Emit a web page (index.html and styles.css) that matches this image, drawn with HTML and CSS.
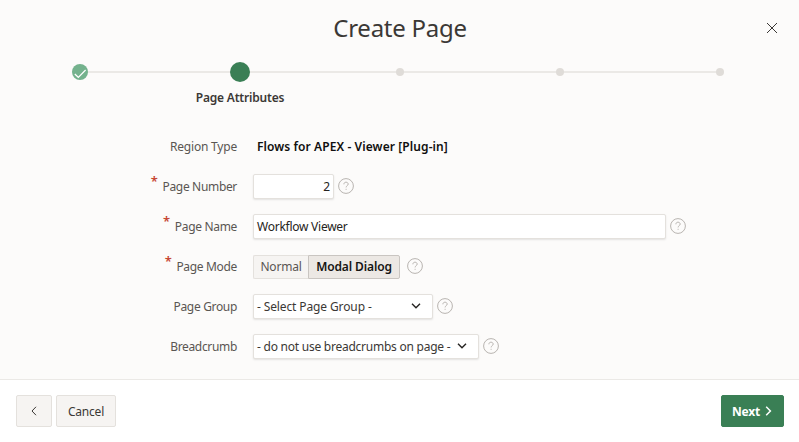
FILE: index.html
```html
<!DOCTYPE html>
<html lang="en">
<head>
<meta charset="utf-8">
<title>Create Page</title>
<link rel="stylesheet" href="styles.css">
</head>
<body>
<svg class="defs" width="0" height="0">
  <symbol id="help" viewBox="0 0 16 16"><circle cx="8" cy="8" r="7.4"/><path d="M5.9 6.3C5.9 4.9 6.8 4.2 8 4.2s2.2.8 2.2 1.9C10.2 7.6 8.1 7.7 8.1 9.4M8.1 10.8v1"/></symbol>
  <symbol id="down" viewBox="0 0 10 6"><path d="M1 .8l4 4 4-4"/></symbol>
</svg>
<div class="dialog">
  <header class="header">
    <h1 class="title">Create Page</h1>
    <button class="close" aria-label="Close"><svg width="12" height="12" viewBox="0 0 12 12"><path d="M1 1l10 10M11 1L1 11"/></svg></button>
  </header>
  <ol class="steps">
    <li class="step done"><span class="marker"><svg width="16" height="16" viewBox="0 0 16 16"><path d="M2.8 10l3.5 3.3L13.6 6"/></svg></span></li>
    <li class="step current"><span class="marker"></span><span class="step-label">Page Attributes</span></li>
    <li class="step"><span class="marker"></span></li>
    <li class="step"><span class="marker"></span></li>
    <li class="step"><span class="marker"></span></li>
  </ol>
  <main class="form">
    <div class="row"><span class="label type">Region Type</span><strong class="value">Flows for APEX - Viewer [Plug-in]</strong></div>
    <div class="row"><label class="label required">Page Number</label><div class="field number">2</div><svg class="help"><use href="#help"/></svg></div>
    <div class="row"><label class="label required">Page Name</label><div class="field name">Workflow Viewer</div><svg class="help"><use href="#help"/></svg></div>
    <div class="row"><label class="label required">Page Mode</label><div class="toggle"><span class="option">Normal</span><span class="option selected">Modal Dialog</span></div><svg class="help wide"><use href="#help"/></svg></div>
    <div class="row"><label class="label">Page Group</label><div class="field group"><span>- Select Page Group -</span><svg class="arrow"><use href="#down"/></svg></div><svg class="help"><use href="#help"/></svg></div>
    <div class="row"><label class="label">Breadcrumb</label><div class="field crumb"><span>- do not use breadcrumbs on page -</span><svg class="arrow"><use href="#down"/></svg></div><svg class="help"><use href="#help"/></svg></div>
  </main>
  <footer class="footer">
    <button class="button back" aria-label="Back"><svg width="6" height="10" viewBox="0 0 6 10"><path d="M5 .8L1 5l4 4.2"/></svg></button>
    <button class="button cancel">Cancel</button>
    <button class="button next"><span>Next</span><svg width="7" height="10" viewBox="0 0 7 10"><path d="M1.2 .8L5.4 5 1.2 9.2"/></svg></button>
  </footer>
</div>
</body>
</html>
```

FILE: styles.css
```css
* { box-sizing: border-box; }
body {
  margin: 0;
  background: #fff;
  color: #3b3835;
  font: 12px/16px "Noto Sans", "Open Sans", sans-serif;
}
svg { fill: none; stroke: currentColor; flex: none; }
.defs { position: absolute; }
button { font: inherit; color: inherit; margin: 0; padding: 0; }
.dialog {
  display: flex;
  flex-direction: column;
  width: 799px;
  height: 442px;
}
.header {
  position: relative;
  height: 61px;
  padding-top: 12px;
  background: #fcfbfa;
  text-align: center;
}
.title {
  margin: 0;
  padding-left: 1px;
  font-size: 24px;
  line-height: 32px;
  font-weight: 400;
  letter-spacing: -.27px;
}
.close {
  position: absolute;
  top: 22px;
  right: 21px;
  width: 12px;
  height: 12px;
  display: flex;
  border: 0;
  background: none;
}
.steps {
  display: grid;
  grid-template-columns: repeat(5, 160px);
  height: 66px;
  margin: 0;
  padding: 0;
  list-style: none;
  background: #fcfbfa;
}
.step {
  position: relative;
  display: flex;
  flex-direction: column;
  align-items: center;
}
.step:not(:last-child)::after {
  content: "";
  position: absolute;
  left: 80px;
  top: 10px;
  width: 160px;
  height: 2px;
  background: #ebe9e6;
}
.marker {
  position: relative;
  z-index: 1;
  width: 8px;
  height: 8px;
  margin-top: 7px;
  border-radius: 50%;
  background: #dfdcd8;
}
.done .marker { width: 16px; height: 16px; margin-top: 3px; background: #74b28d; color: #fff; }
.done svg { display: block; stroke-width: 1.2; }
.current .marker { width: 20px; height: 20px; margin-top: 1px; background: #3a7f55; }
.step-label { margin-top: 8px; font-weight: 600; letter-spacing: -.2px; white-space: nowrap; }
.form {
  height: 252px;
  background: #fcfbfa;
}
.row {
  display: flex;
  align-items: center;
  height: 40px;
}
.label {
  flex: none;
  width: 237px;
  margin-right: 16px;
  color: #5a5652;
  letter-spacing: -.33px;
  text-align: right;
}
.label.type { letter-spacing: -.2px; }
.required::before {
  content: "*";
  position: relative;
  top: -5px;
  margin-right: 5px;
  color: #c74634;
  font-size: 13px;
  font-weight: 600;
  line-height: 0;
}
.value { padding-left: 4px; font-weight: 600; letter-spacing: .09px; color: #100f0e; }
.field {
  display: flex;
  align-items: center;
  height: 25px;
  margin-top: -1px;
  padding: 0 3px;
  border: 1px solid #e4e1dd;
  border-radius: 2px;
  background: #fff;
  box-shadow: 0 1px 2px rgba(0, 0, 0, .1);
  color: #252321;
  white-space: nowrap;
}
.number { width: 81px; justify-content: flex-end; }
.name { width: 413px; letter-spacing: -.25px; }
.group { width: 180px; letter-spacing: -.12px; }
.crumb { width: 226px; letter-spacing: -.24px; }
.field span { color: #3b3835; }
.arrow { width: 10px; height: 6px; margin: -1px 8px 0 auto; stroke-width: 1.4; }
.help { width: 16px; height: 16px; margin: -2px 0 0 4px; color: #b8b4b0; stroke-width: 1; }
.help.wide { margin-left: 7px; }
.toggle { display: flex; height: 24px; margin-top: -1px; color: #5a5652; }
.option {
  display: flex;
  align-items: center;
  justify-content: center;
  width: 55px;
  border: 1px solid #e4e1dd;
  border-right: 0;
  border-radius: 2px 0 0 2px;
  background: #f6f4f2;
  letter-spacing: -.2px;
}
.option.selected {
  width: 92px;
  border: 1px solid #c9c5c1;
  border-radius: 0 2px 2px 0;
  background: #ece8e4;
  color: #161513;
  font-weight: 600;
  letter-spacing: -.12px;
}
.footer {
  display: flex;
  gap: 4px;
  height: 63px;
  padding: 15px 15px 0 16px;
  border-top: 1px solid #ebe9e6;
  background: #fff;
}
.button {
  display: flex;
  align-items: center;
  justify-content: center;
  height: 32px;
  border: 1px solid #e4e1dd;
  border-radius: 2px;
  background: #f6f4f2;
}
.back { width: 36px; }
.cancel { width: 60px; padding-top: 1px; letter-spacing: -.2px; }
.next {
  width: 63px;
  gap: 5px;
  margin-left: auto;
  border-color: #3a7f55;
  background: #3a7f55;
  color: #fff;
  font-weight: 700;
}
.next span { padding-top: 1px; letter-spacing: -.2px; }
.next svg { margin-right: 1px; stroke-width: 1.5; }
```
